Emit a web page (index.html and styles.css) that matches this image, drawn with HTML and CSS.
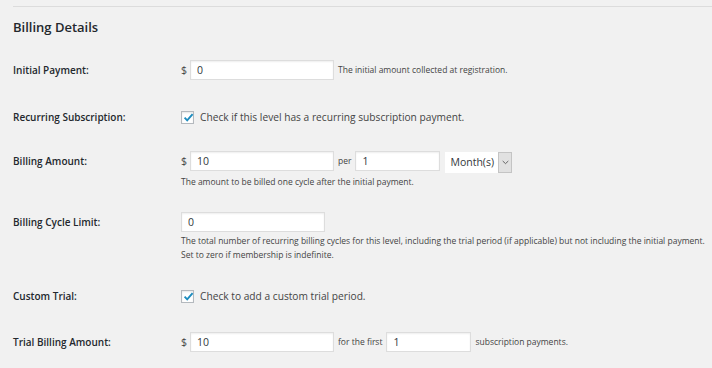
FILE: index.html
```html
<!DOCTYPE html>
<html lang="en">
<head>
  <meta charset="UTF-8" />
  <title>Billing Details</title>
  <link rel="stylesheet" href="styles.css">
</head>
<body>
  <div class="wrap">
    <hr class="divider">
    <h3 class="section-title">Billing Details</h3>

    <div class="form-table">
      <div class="row row-initial">
        <div class="label">Initial Payment:</div>
        <div class="field">
          <div class="line">
            <span class="currency">$</span>
            <input type="text" class="input wide" value="0">
            <span class="desc inline">The initial amount collected at registration.</span>
          </div>
        </div>
      </div>

      <div class="row row-recurring">
        <div class="label">Recurring Subscription:</div>
        <div class="field">
          <label class="check-line">
            <span class="checkbox">
              <svg viewBox="0 0 13 13" width="13" height="13"><path d="M2.6 6.6 L5.2 9.3 L10.6 3.2" fill="none" stroke="#1e8cbe" stroke-width="1.9"/></svg>
            </span>
            Check if this level has a recurring subscription payment.
          </label>
        </div>
      </div>

      <div class="row row-amount">
        <div class="label">Billing Amount:</div>
        <div class="field">
          <div class="line">
            <span class="currency">$</span>
            <input type="text" class="input wide" value="10">
            <span class="desc inline">per</span>
            <input type="text" class="input narrow" value="1">
            <div class="select">
              <span class="select-value">Month(s)</span>
              <span class="select-arrow">
                <svg viewBox="0 0 8 5" width="7" height="5"><path d="M0.8 0.8 L4 3.8 L7.2 0.8" fill="none" stroke="#555" stroke-width="1"/></svg>
              </span>
            </div>
          </div>
          <p class="desc desc-amount">The amount to be billed one cycle after the initial payment.</p>
        </div>
      </div>

      <div class="row row-cycle">
        <div class="label">Billing Cycle Limit:</div>
        <div class="field">
          <div class="line">
            <input type="text" class="input wide" value="0">
          </div>
          <p class="desc desc-cycle">The total number of recurring billing cycles for this level, including the trial period (if applicable) but not including the initial payment.<br>Set to zero if membership is indefinite.</p>
        </div>
      </div>

      <div class="row row-trial">
        <div class="label">Custom Trial:</div>
        <div class="field">
          <label class="check-line">
            <span class="checkbox">
              <svg viewBox="0 0 13 13" width="13" height="13"><path d="M2.6 6.6 L5.2 9.3 L10.6 3.2" fill="none" stroke="#1e8cbe" stroke-width="1.9"/></svg>
            </span>
            Check to add a custom trial period.
          </label>
        </div>
      </div>

      <div class="row row-trial-amount">
        <div class="label">Trial Billing Amount:</div>
        <div class="field">
          <div class="line">
            <span class="currency">$</span>
            <input type="text" class="input wide" value="10">
            <span class="desc inline">for the first</span>
            <input type="text" class="input narrow" value="1">
            <span class="desc inline">subscription payments.</span>
          </div>
        </div>
      </div>
    </div>
  </div>
</body>
</html>
```

FILE: styles.css
```css
body {
  margin: 0;
  padding: 0;
  background: #f1f1f1;
  font-family: 'Open Sans', 'Noto Sans', sans-serif;
  color: #444;
}

.wrap {
  padding: 6px 0 0 13px;
}

.divider {
  border: none;
  border-top: 1px solid #dcdcdc;
  margin: 0;
  height: 0;
}

.section-title {
  margin: 12px 0 0;
  font-size: 13px;
  line-height: 17px;
  font-weight: 600;
  color: #23282d;
}

.row {
  display: grid;
  grid-template-columns: 168px 1fr;
}

.row-initial { padding-top: 24px; }
.row-recurring { padding-top: 30px; }
.row-amount { padding-top: 27px; }
.row-cycle { padding-top: 23px; }
.row-trial { padding-top: 27px; }
.row-trial-amount { padding-top: 29px; }

.label {
  font-size: 10px;
  font-weight: 600;
  color: #23282d;
  line-height: 20px;
}

.row-recurring .label,
.row-trial .label {
  line-height: 14px;
}

.line {
  display: flex;
  align-items: center;
  height: 20px;
}

.currency {
  font-size: 10.5px;
  color: #444;
  width: 9px;
}

.input {
  box-sizing: border-box;
  height: 20px;
  border: 1px solid #ddd;
  box-shadow: inset 0 1px 2px rgba(0, 0, 0, 0.07);
  background: #fff;
  font-family: inherit;
  font-size: 10.5px;
  color: #32373c;
  padding: 0 6px;
  margin: 0;
  outline: none;
}

.input.wide { width: 144px; }
.input.narrow { width: 85px; }

.desc {
  font-size: 8.5px;
  color: #444;
  line-height: 14px;
  margin: 0;
}

.desc-amount { margin-top: 4px; }
.desc-cycle { margin-top: 2px; }

.desc.inline {
  margin: 0 4px;
}

.select {
  display: flex;
  height: 21px;
  margin-left: 5px;
  margin-top: 2px;
  box-sizing: border-box;
  background: #fff;
}

.select-value {
  font-size: 10.5px;
  color: #32373c;
  padding: 0 5px;
  line-height: 21px;
  width: 53px;
  box-sizing: border-box;
}

.select-arrow {
  width: 14px;
  background: #e1e1e1;
  border: 1px solid #c4c4c4;
  box-sizing: border-box;
  display: flex;
  align-items: center;
  justify-content: center;
}

.check-line {
  display: flex;
  align-items: center;
  height: 14px;
  font-size: 10.2px;
  color: #444;
}

.checkbox {
  box-sizing: border-box;
  width: 13px;
  height: 13px;
  border: 1px solid #b4b9be;
  background: #fff;
  box-shadow: inset 0 1px 2px rgba(0, 0, 0, 0.1);
  margin-right: 6px;
  display: flex;
  align-items: center;
  justify-content: center;
  position: relative;
}

.checkbox svg {
  position: absolute;
  left: 0;
  top: -1px;
}
```
